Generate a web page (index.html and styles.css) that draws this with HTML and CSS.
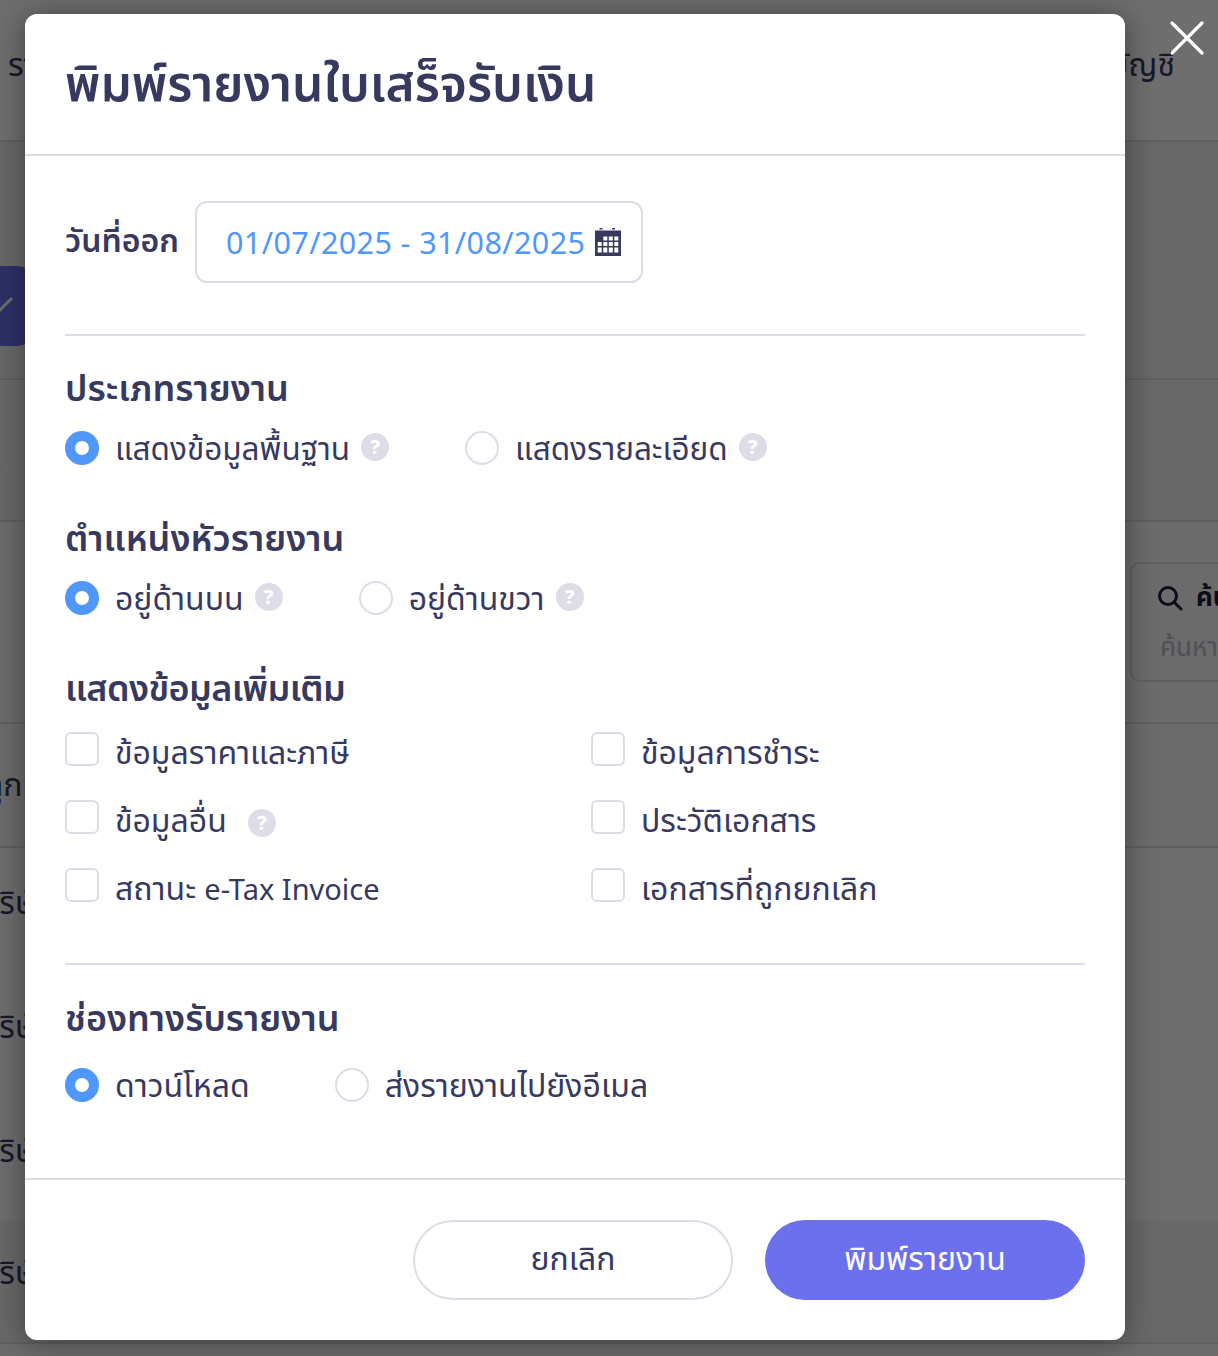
FILE: index.html
```html
<!DOCTYPE html>
<html lang="en">
<head>
    <meta charset="UTF-8">
    <title>พิมพ์รายงานใบเสร็จรับเงิน</title>
    <link rel="stylesheet" href="styles.css">
</head>
<body>

    <!-- Page behind the dialog -->
    <div class="page">
        <div class="topbar">
            <span>รายรับ</span>
            <span>บัญชี</span>
        </div>
        <div class="section section-action">
            <div class="add-btn">
                <svg width="40" height="40" viewBox="0 0 40 40"><path d="M8 24l6 6 18-18" fill="none" stroke="#fff" stroke-width="3"/></svg>
            </div>
        </div>
        <div class="section section-tabs"><span class="cut-count">0</span></div>
        <div class="section section-filter">
            <div class="search-card">
                <div class="search-title">
                    <svg width="28" height="28" viewBox="0 0 28 28"><circle cx="12" cy="12" r="8.5" fill="none" stroke="#1d1e3a" stroke-width="3"/><path d="M18 18l7 7" stroke="#1d1e3a" stroke-width="3" stroke-linecap="round"/></svg>
                    <b>ค้นหา</b>
                </div>
                <div class="search-hint">ค้นหาเอกสาร</div>
            </div>
        </div>
        <div class="row row-head"><span class="cut-head">ลูกค้า</span></div>
        <div class="row"><span class="cut-text">บริษัท</span></div>
        <div class="row"><span class="cut-text">บริษัท</span></div>
        <div class="row"><span class="cut-text">บริษัท</span></div>
        <div class="row row-last"><span class="cut-text">บริษัท</span></div>
    </div>
    <div class="overlay"></div>

    <!-- Close button -->
    <svg class="close-x" width="36" height="36" viewBox="0 0 36 36"><path d="M3 3l30 30M33 3L3 33" stroke="#fff" stroke-width="3.2" stroke-linecap="round"/></svg>

    <!-- Dialog -->
    <div class="modal">
        <div class="modal-header">
            <h1>พิมพ์รายงานใบเสร็จรับเงิน</h1>
        </div>

        <div class="modal-body">
            <div class="date-row">
                <label>วันที่ออก</label>
                <div class="date-input">
                    <span>01/07/2025 - 31/08/2025</span>
                    <svg width="26" height="28" viewBox="0 0 26 28">
                        <rect x="4.500" y="0" width="3" height="1.500" fill="#38395f"/>
                        <rect x="17" y="0" width="3" height="1.500" fill="#38395f"/>
                        <rect x="0" y="2.500" width="26" height="25.500" fill="#38395f"/>
                        <g fill="#fff">
                            <rect x="8.300" y="8.500" width="4" height="4"/>
                            <rect x="13.800" y="8.500" width="4" height="4"/>
                            <rect x="19.300" y="8.500" width="4" height="4"/>
                            <rect x="2.700" y="14" width="4" height="4"/>
                            <rect x="8.300" y="14" width="4" height="4"/>
                            <rect x="13.800" y="14" width="4" height="4"/>
                            <rect x="19.300" y="14" width="4" height="4"/>
                            <rect x="2.700" y="19.500" width="4" height="5"/>
                            <rect x="8.300" y="19.500" width="4" height="5"/>
                            <rect x="13.800" y="19.500" width="4" height="5"/>
                            <rect x="19.300" y="19.500" width="4" height="5"/>
                        </g>
                    </svg>
                </div>
            </div>

            <hr class="divider">

            <div class="group group-type">
                <h3>ประเภทรายงาน</h3>
                <div class="radio-line">
                    <div class="option gap-type">
                        <span class="radio checked"></span>
                        <span class="option-text">แสดงข้อมูลพื้นฐาน</span>
                        <span class="help">?</span>
                    </div>
                    <div class="option">
                        <span class="radio"></span>
                        <span class="option-text">แสดงรายละเอียด</span>
                        <span class="help">?</span>
                    </div>
                </div>
            </div>

            <div class="group group-position">
                <h3>ตำแหน่งหัวรายงาน</h3>
                <div class="radio-line">
                    <div class="option gap-type">
                        <span class="radio checked"></span>
                        <span class="option-text">อยู่ด้านบน</span>
                        <span class="help">?</span>
                    </div>
                    <div class="option">
                        <span class="radio"></span>
                        <span class="option-text">อยู่ด้านขวา</span>
                        <span class="help">?</span>
                    </div>
                </div>
            </div>

            <div class="group group-extra">
                <h3>แสดงข้อมูลเพิ่มเติม</h3>
                <div class="check-grid">
                    <div class="option"><span class="check"></span><span class="option-text">ข้อมูลราคาและภาษี</span></div>
                    <div class="option"><span class="check"></span><span class="option-text">ข้อมูลการชำระ</span></div>
                    <div class="option"><span class="check"></span><span class="option-text">ข้อมูลอื่น</span><span class="help help-low">?</span></div>
                    <div class="option"><span class="check"></span><span class="option-text">ประวัติเอกสาร</span></div>
                    <div class="option"><span class="check"></span><span class="option-text">สถานะ <span class="latin">e-Tax Invoice</span></span></div>
                    <div class="option"><span class="check"></span><span class="option-text">เอกสารที่ถูกยกเลิก</span></div>
                </div>
            </div>

            <hr class="divider">

            <div class="group group-channel">
                <h3>ช่องทางรับรายงาน</h3>
                <div class="radio-line">
                    <div class="option gap-channel">
                        <span class="radio checked"></span>
                        <span class="option-text">ดาวน์โหลด</span>
                    </div>
                    <div class="option">
                        <span class="radio"></span>
                        <span class="option-text">ส่งรายงานไปยังอีเมล</span>
                    </div>
                </div>
            </div>
        </div>

        <div class="modal-footer">
            <button class="btn btn-cancel">ยกเลิก</button>
            <button class="btn btn-print">พิมพ์รายงาน</button>
        </div>
    </div>

</body>
</html>
```

FILE: styles.css
```css
/* Global */
html, body {
    margin: 0;
    height: 1356px;
    overflow: hidden;
}

body {
    position: relative;
    font-family: "Noto Sans", "Noto Sans Thai", "Open Sans", sans-serif;
    color: #38395f;
    background: #f8f8fa;
}

/* Page behind */
.page {
    height: 1356px;
    font-size: 32px;
    color: #38395f;
    overflow: hidden;
}

.topbar {
    height: 142px;
    background: #fff;
    box-sizing: border-box;
    padding: 42px 43px 0 8px;
    display: flex;
    justify-content: space-between;
    border-bottom: 2px solid #dcdce4;
}

.section {
    border-bottom: 2px solid #dcdce4;
    box-sizing: border-box;
    background: #f2f2f4;
}

.section-action {
    height: 238px;
    padding-top: 124px;
}

.add-btn {
    width: 80px;
    height: 80px;
    margin-left: -40px;
    border-radius: 24px;
    background: #6c70ec;
    display: flex;
    align-items: center;
    justify-content: center;
}

.section-tabs {
    height: 142px;
    padding-top: 66px;
}

.section-filter {
    height: 202px;
    padding: 40px 0 0 1130px;
    background: #f8f8fa;
}

.search-card {
    width: 300px;
    height: 120px;
    box-sizing: border-box;
    border: 2px solid #dcdce4;
    border-radius: 10px;
    padding: 14px 24px;
}

.search-title {
    display: flex;
    align-items: center;
    gap: 12px;
    font-size: 26px;
    color: #1d1e3a;
}

.search-hint {
    margin-top: 10px;
    padding-left: 4px;
    font-size: 26px;
    color: #b9b9c6;
}

.row {
    height: 124px;
    box-sizing: border-box;
    padding-top: 32px;
    background: #fdfdfd;
}

.row-head {
    padding-top: 38px;
    background: #f8f8fa;
    border-bottom: 2px solid #dcdce4;
}

.row-last {
    padding-top: 30px;
    background: #f0f0f2;
    border-bottom: 2px solid #dcdce4;
}

.cut-text {
    display: inline-block;
    margin-left: -20px;
}

.cut-head {
    display: inline-block;
    margin-left: -15px;
}

.cut-count {
    display: inline-block;
    margin-left: -17px;
}

.overlay {
    position: absolute;
    inset: 0;
    background: rgba(0, 0, 0, 0.57);
}

.close-x {
    position: absolute;
    top: 20px;
    left: 1169px;
}

/* Dialog */
.modal {
    position: absolute;
    top: 14px;
    left: 25px;
    width: 1100px;
    height: 1326px;
    background: #fff;
    border-radius: 12px;
    box-shadow: 0 2px 30px rgba(0, 0, 0, 0.4);
    display: flex;
    flex-direction: column;
}

.modal-header {
    height: 142px;
    box-sizing: border-box;
    padding: 34px 40px 0;
    border-bottom: 2px solid #dddde8;
}

.modal-header h1 {
    margin: 0;
    font-size: 49.500px;
    line-height: 68px;
    font-weight: 600;
}

.modal-body {
    flex: 1;
    padding: 45px 40px 0;
}

.date-row {
    display: flex;
    align-items: center;
    gap: 16px;
}

.date-row label {
    width: 114px;
    font-size: 32px;
    font-weight: 600;
    white-space: nowrap;
}

.date-input {
    width: 448px;
    height: 82px;
    box-sizing: border-box;
    border: 2px solid #dddde8;
    border-radius: 12px;
    padding: 0 20px 0 29px;
    display: flex;
    align-items: center;
    justify-content: space-between;
    font-size: 30.500px;
    letter-spacing: 0.4px;
    color: #4f97fb;
}

.divider {
    border: 0;
    height: 2px;
    margin: 0;
    background: #dddde8;
}

.date-row + .divider {
    margin-top: 51px;
}

.group h3 {
    margin: 0 0 -2px;
    font-size: 36px;
    line-height: 50px;
    font-weight: 600;
}

.group-type {
    padding-top: 27px;
}

.group-type .option-text {
    font-size: 31.500px;
}

.group-position {
    padding-top: 48px;
}

.group-extra {
    padding-top: 48px;
    padding-bottom: 61px;
}

.group-extra h3 {
    letter-spacing: -0.6px;
}

.group-channel {
    padding-top: 28px;
}

.radio-line {
    display: flex;
    margin-top: 20px;
}

.group-channel .radio-line {
    margin-top: 27px;
}

.option {
    display: flex;
    align-items: center;
    height: 34px;
}

.option-text {
    font-size: 32px;
    margin-left: 16px;
    padding-top: 4px;
    white-space: nowrap;
}

.latin {
    font-size: 29px;
}

.gap-type {
    margin-right: 76px;
}

.gap-channel {
    margin-right: 85px;
}

.radio {
    width: 34px;
    height: 34px;
    box-sizing: border-box;
    border: 2px solid #dddde8;
    border-radius: 50%;
    flex: none;
}

.radio.checked {
    border: 10px solid #4f97fb;
}

.check {
    width: 34px;
    height: 34px;
    box-sizing: border-box;
    border: 2px solid #dddde8;
    border-radius: 6px;
    flex: none;
}

.check-grid {
    display: grid;
    grid-template-columns: 526px 1fr;
    row-gap: 34px;
    margin-top: 21px;
}

.check-grid .option-text {
    padding-top: 10px;
}

.help {
    width: 28px;
    height: 28px;
    margin-left: 11px;
    margin-top: -2px;
    border-radius: 50%;
    background: #dddde8;
    color: #fff;
    font-size: 20px;
    font-weight: 800;
    line-height: 28px;
    text-align: center;
    flex: none;
}

.help-low {
    margin-left: 21px;
    margin-top: 12px;
}

/* Footer */
.modal-footer {
    height: 162px;
    box-sizing: border-box;
    border-top: 2px solid #dddde8;
    padding: 40px 40px 0;
    display: flex;
    justify-content: flex-end;
    gap: 32px;
}

.btn {
    width: 320px;
    height: 80px;
    padding: 0;
    border-radius: 40px;
    font-family: inherit;
    font-size: 32px;
}

.btn-cancel {
    background: #fff;
    border: 2px solid #dddde8;
    color: #38395f;
}

.btn-print {
    background: #6c70ec;
    border: none;
    color: #fff;
}
```
